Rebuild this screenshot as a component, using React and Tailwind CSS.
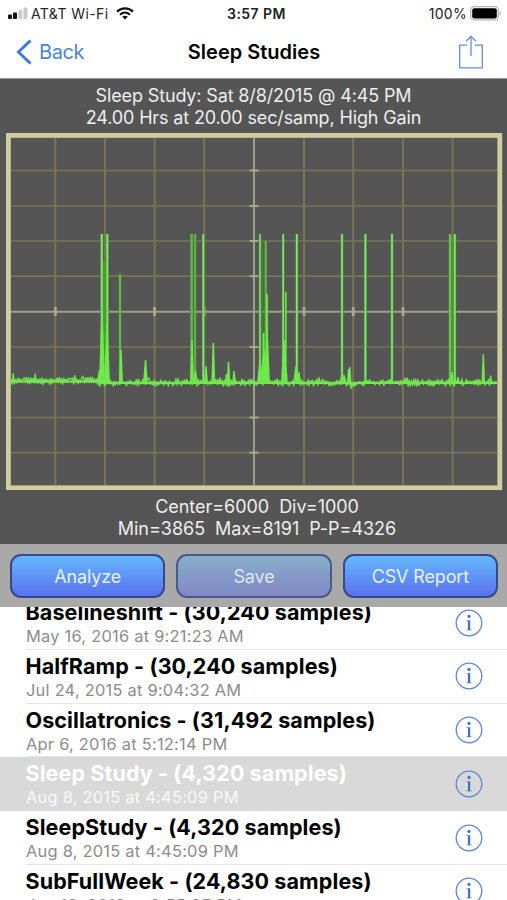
import React from "react";

// Tall peaks: [x, top y, width, colour]
const LIGHT = "#84e56d";
const DARK = "#4f9a38";
const PEAKS = [
  [101.8, 234, 3, LIGHT], [104.6, 262, 3.2, DARK], [107.3, 234, 3, LIGHT], [120, 274, 2.4, "#67c94f"],
  [191.6, 234, 3, "#6cb45c"], [195, 234, 2.6, "#5fb84b"], [203.3, 234, 2.8, LIGHT],
  [262.4, 242, 1.5, "#4c7b3c"], [260, 234, 2.4, LIGHT], [265.7, 241, 2.6, "#66b454"], [266.7, 294, 3, "#77ec58"], [263.6, 333, 3, "#6fe64e"],
  [283.2, 234, 2.6, LIGHT], [285.8, 292, 2.4, "#6fdd52"], [296.8, 234, 2.8, LIGHT],
  [342, 234, 2.8, LIGHT], [365.4, 234, 2.8, LIGHT], [392, 234, 2.8, LIGHT],
  [452.4, 236, 2.4, DARK], [450, 234, 2.8, "#74c560"], [454.8, 234, 2.8, LIGHT],
];

// Small bumps that stand out of the baseline: [x, top y, half width]
const BUMPS = [
  [102, 310, 3], [107, 325, 3], [99.5, 370, 3], [121, 350, 2], [145.5, 360, 2.5], [192, 340, 2], [195.5, 371, 2.5], [206, 366, 2],
  [213.3, 343, 2], [226.5, 374, 2], [228.5, 362, 2], [234, 371, 2], [260, 360, 3], [267, 330, 3], [264, 350, 4], [284, 340, 3],
  [286, 368, 2], [296, 366, 3], [299, 372, 2], [344, 375, 3], [349.8, 367, 1.8], [348.5, 369, 1.6], [483.3, 354, 1.8], [452, 372, 2], [458, 377, 2],
];

const GRID_X = [55.3, 105, 154.6, 204.2, 304, 353.2, 403, 452.6];
const GRID_Y = [170.5, 206, 241, 276.2, 347, 382.3, 417.5, 452.7];

function noise() {
  let s = 41;
  const rnd = () => ((s = (s * 16807) % 2147483647) / 2147483647);
  let d = "M11 381";
  for (let x = 11; x < 497; x += 1.1) {
    const mid = x < 100 ? 381 : 382.6;
    const burst = rnd() > 0.9 ? -5 : 0;
    const sign = Math.round(x / 1.1) % 2 ? 1 : -1;
    const dip = x > 350 && x < 357 ? 2 : 0;
    d += `L${x.toFixed(1)} ${(mid + dip + sign * rnd() * 3.7 + burst * rnd()).toFixed(1)}`;
  }
  return d;
}

function Scope() {
  return (
    <svg width="507" height="357" viewBox="0 133 507 357" className="block">
      <rect x="8.4" y="135.4" width="491.4" height="352.4" fill="#555555" stroke="#d0ce9f" strokeWidth="4.8" />
      <g stroke="#787557" strokeWidth="2">
        {GRID_X.map((x) => <path key={x} d={`M${x} 138V485`} />)}
        {GRID_Y.map((y) => <path key={y} d={`M11 ${y}H497`} strokeWidth="1.7" />)}
      </g>
      <g stroke="#a09f8a" strokeWidth="2">
        <path d="M11 311.8H497M254 138V485" />
        {GRID_X.map((x) => <path key={x} d={`M${x} 307V316`} stroke="#aaa98c" strokeWidth="2.8" />)}
        {GRID_Y.map((y) => <path key={y} d={`M249.5 ${y}H258.5`} stroke="#aaa98c" />)}
      </g>
      {PEAKS.map(([x, y, w, c]) => (
        <g key={x}>
          <path d={`M${x} ${y}V384`} stroke="#4e9938" strokeWidth={w} />
          <path d={`M${x} ${y}V384`} stroke={c} strokeWidth={w * 0.6} />
        </g>
      ))}
      {BUMPS.map(([x, y, h]) => (
        <path key={x} d={`M${x - h} 384L${x - 0.7} ${y}H${x + 0.7}L${x + h} 384Z`} fill="#6fe84c" />
      ))}
      <path d={noise()} fill="none" stroke="#6be549" strokeWidth="1.4" strokeLinejoin="round" />
      <path d="M11 381.6H100L110 383H497" fill="none" stroke="#78e555" strokeWidth="2" />
    </svg>
  );
}

function Info() {
  return (
    <svg width="28" height="28" viewBox="0 0 28 28" fill="none" className="shrink-0">
      <circle cx="14" cy="14" r="12.8" stroke="#5c88d6" strokeWidth="1.3" />
      <circle cx="14" cy="7.4" r="1.6" fill="#3f71cc" />
      <path d="M11.6 11.2H15.2V20.4H16.6V21.2H11.6V20.4H13V12.1H11.6Z" fill="#3f71cc" />
    </svg>
  );
}

const ROWS = [
  ["Baselineshift - (30,240 samples)", "May 16, 2016 at 9:21:23 AM"],
  ["HalfRamp - (30,240 samples)", "Jul 24, 2015 at 9:04:32 AM"],
  ["Oscillatronics - (31,492 samples)", "Apr 6, 2016 at 5:12:14 PM"],
  ["Sleep Study - (4,320 samples)", "Aug 8, 2015 at 4:45:09 PM"],
  ["SleepStudy - (4,320 samples)", "Aug 8, 2015 at 4:45:09 PM"],
  ["SubFullWeek - (24,830 samples)", "Jun 18, 2018 at 9:55:35 PM"],
];

function Row({ title, date, selected }) {
  return (
    <div className={`flex h-[53.8px] shrink-0 pl-[26px] ${selected ? "bg-[#d9d9d9] text-white" : "text-black"}`}>
      <div className={`flex flex-1 justify-between border-b pr-6 ${selected ? "border-[#d9d9d9]" : "border-[#e6e6e6]"}`}>
        <div className="whitespace-nowrap pt-[3px]">
          <div className="-ml-[0.5px] text-[21.5px] font-bold leading-[27px] tracking-[0.1px]">{title}</div>
          <div className={`text-[16.4px] leading-[20px] tracking-[0.25px] ${selected ? "text-[#f8f8f8]" : "text-[#8c8c8c]"}`}>{date}</div>
        </div>
        <div className="pt-[12.5px]"><Info /></div>
      </div>
    </div>
  );
}

function Button({ children, dim }) {
  return (
    <button
      className={`flex h-11 flex-1 items-center justify-center rounded-[11px] border-2 bg-linear-to-b text-[18px] tracking-[-0.15px] ${
        dim
          ? "border-[#485a8c] from-[#86aec9] to-[#8287c4] text-[#dfe6f3]"
          : "border-[#344a88] from-[#65b7fb] to-[#5a70ef] text-[#e6f1ff]"
      }`}
    >
      {children}
    </button>
  );
}

export default function App() {
  return (
    <div className="flex h-[900px] w-[507px] flex-col overflow-hidden bg-white font-[Inter,sans-serif]">
      <div className="grid h-[27px] shrink-0 grid-cols-3 items-center pl-2 pr-[5px] text-[14px] text-[#222]">
        <div className="flex items-center whitespace-nowrap">
          <svg width="20" height="13" viewBox="0 0 20 13">
            <rect x="0" y="7.5" width="4" height="4.5" rx="1" fill="#111" />
            <rect x="5" y="5.5" width="4" height="6.5" rx="1" fill="#111" />
            <rect x="10.4" y="3" width="4" height="9" rx="1" fill="#c9c9c9" />
            <rect x="15.5" y="0.5" width="4" height="11.5" rx="1" fill="#c9c9c9" />
          </svg>
          <span className="ml-[3px] tracking-[0.4px]">AT&amp;T Wi-Fi</span>
          <svg width="18" height="13" viewBox="0 0 18 13" className="ml-[7px]" fill="none" stroke="#111" strokeWidth="2.2">
            <path d="M1 4.6C5.5 .3 12.5 .3 17 4.6M4 7.7C7 5 11 5 14 7.7" />
            <path d="M9 12.5L6.2 9.8C7.8 8.5 10.2 8.5 11.8 9.8Z" fill="#111" stroke="none" />
          </svg>
        </div>
        <div className="pl-[3px] text-center font-semibold tracking-[0.45px]">3:57 PM</div>
        <div className="flex items-center justify-end">
          <span className="tracking-[0.3px]">100%</span>
          <svg width="32" height="15" viewBox="0 0 32 15" className="ml-[3px]">
            <rect x="0.7" y="0.7" width="27.6" height="13.2" rx="3.5" fill="#fff" stroke="#b5b5b5" strokeWidth="1.3" />
            <rect x="2.2" y="2.2" width="24.6" height="10.2" rx="2" fill="#000" />
            <path d="M29.6 5C31.3 5.8 31.3 9 29.6 9.8Z" fill="#aaa" />
          </svg>
        </div>
      </div>
      <div className="grid h-[52px] shrink-0 grid-cols-3 items-center border-b border-[#999] pb-px pl-4 pr-[22px]">
        <div className="flex items-center text-[20px] text-[#4a83dc]">
          <svg width="16" height="26" viewBox="0 0 16 26" fill="none" stroke="#3f78d8" strokeWidth="3"><path d="M14.5 1.5L2.5 13L14.5 24.5" /></svg>
          <span className="ml-[7px] tracking-[-0.4px]">Back</span>
        </div>
        <div className="whitespace-nowrap pl-[7px] text-center text-[20px] font-semibold text-black">Sleep Studies</div>
        <div className="flex justify-end">
          <svg width="26" height="34" viewBox="0 0 26 34" fill="none" stroke="#5f8fdc" strokeWidth="1.3" className="-translate-x-px">
            <path d="M9 10.2H1.7V32.8H24.3V10.2H17M13 21V1.5M8 6.3L13 1.3L18 6.3" />
          </svg>
        </div>
      </div>
      <div className="flex h-[465px] shrink-0 flex-col bg-[#555555] text-center text-[18px] text-[#eeeeee]">
        <div className="h-[54px] pt-[6px] leading-[21.5px] tracking-[-0.14px]">
          <div>Sleep Study: Sat 8/8/2015 @ 4:45 PM</div>
          <div>24.00 Hrs at 20.00 sec/samp, High Gain</div>
        </div>
        <Scope />
        <div className="whitespace-pre pl-[7px] pt-[6px] leading-[21.5px] tracking-[-0.04px]">
          <div>{"Center=6000  Div=1000"}</div>
          <div>{"Min=3865  Max=8191  P-P=4326"}</div>
        </div>
      </div>
      <div className="flex h-[63px] shrink-0 gap-[11px] bg-[#a9a9a9] pl-[10px] pr-[9px] pt-[10px]">
        <Button>Analyze</Button>
        <Button dim>Save</Button>
        <Button>CSV Report</Button>
      </div>
      <div className="flex min-h-0 flex-1 flex-col justify-start overflow-hidden">
        <div className="-mt-[11px] flex flex-col">
          {ROWS.map(([title, date], i) => <Row key={title} title={title} date={date} selected={i === 3} />)}
        </div>
      </div>
    </div>
  );
}
